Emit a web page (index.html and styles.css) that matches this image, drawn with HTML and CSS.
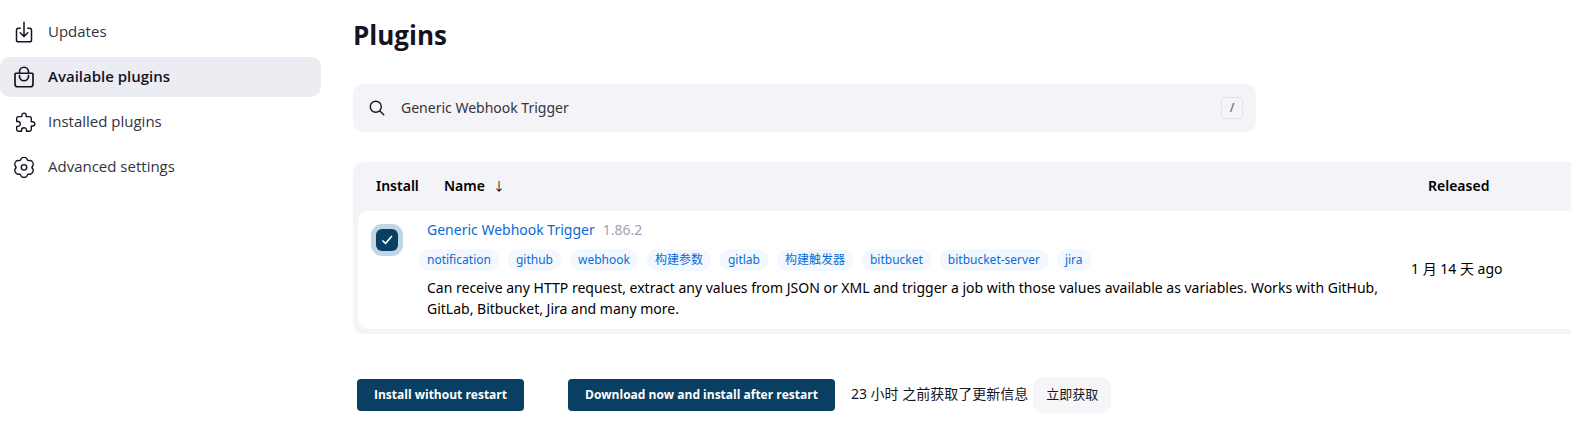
FILE: index.html
```html
<!DOCTYPE html>
<html lang="en">
<head>
<meta charset="utf-8">
<title>Plugins</title>
<link rel="stylesheet" href="styles.css">
</head>
<body>
<div class="page">
  <nav class="side">
    <a class="task" href="#"><svg class="icon" viewBox="0 0 512 512"><path d="M336 176h40a40 40 0 0140 40v208a40 40 0 01-40 40H136a40 40 0 01-40-40V216a40 40 0 0140-40h40M176 272l80 80 80-80M256 48v288"/></svg>Updates</a>
    <a class="task task-active" href="#"><svg class="icon" viewBox="0 0 512 512"><path d="M80 176a16 16 0 00-16 16v216c0 30.24 25.76 56 56 56h272c30.24 0 56-24.51 56-54.75V192a16 16 0 00-16-16zM160 176v-32a96 96 0 0196-96h0a96 96 0 0196 96v32M160 224v16a96 96 0 0096 96h0a96 96 0 0096-96v-16"/></svg>Available plugins</a>
    <a class="task" href="#"><svg class="icon" viewBox="-60 -24 552 552"><path d="M413.66 246.1H386a2 2 0 01-2-2v-77.24A38.86 38.86 0 00345.14 128H267.9a2 2 0 01-2-2V98.34c0-27.14-21.5-49.86-48.64-50.33a49.53 49.53 0 00-50.4 49.51V126a2 2 0 01-2 2H87.62A39.74 39.74 0 0048 167.62V238a2 2 0 002 2h26.91c29.37 0 53.68 25.48 54.09 54.85.42 29.87-23.51 57.15-53.29 57.15H50a2 2 0 00-2 2v70.38A39.74 39.74 0 0087.62 464H158a2 2 0 002-2v-20.93c0-30.28 24.75-56.35 55-57.06 30.1-.7 57 20.31 57 50.28V462a2 2 0 002 2h71.14A38.86 38.86 0 00384 425.14v-78a2 2 0 012-2h28.48c27.63 0 49.52-22.67 49.52-50.4s-23.2-48.64-50.34-48.64z"/></svg>Installed plugins</a>
    <a class="task" href="#"><svg class="icon" viewBox="-16 -24 544 544"><circle cx="256" cy="256" r="62"/><path d="M193 55C205 22 307 22 319 55Q335 119 399 100C433 94 482 179 462 207Q414 256 462 305C482 333 433 418 399 412Q335 393 319 457C307 490 205 490 193 457Q177 393 113 412C79 418 30 333 50 305Q98 256 50 207C30 179 79 94 113 100Q177 119 193 55Z"/></svg>Advanced settings</a>
  </nav>
  <main class="main">
    <h1 class="title">Plugins</h1>
    <label class="search">
      <svg class="search-icon" viewBox="0 0 512 512"><path d="M221.09 64a157.09 157.09 0 10157.09 157.09A157.1 157.1 0 00221.09 64zM338.29 338.29L448 448"/></svg>
      <input class="search-input" type="text" aria-label="Search available plugins" value="Generic Webhook Trigger">
      <kbd class="key">/</kbd>
    </label>
    <table class="plugins">
      <thead>
        <tr><th class="col-install">Install</th><th class="col-name">Name<span class="sort">↓</span></th><th class="col-date">Released</th></tr>
      </thead>
      <tbody>
        <tr>
          <td class="cell-check"><input class="check" type="checkbox" aria-label="Install Generic Webhook Trigger" checked></td>
          <td class="cell-info">
            <div class="heading"><a class="link" href="#">Generic Webhook Trigger</a><span class="version">1.86.2</span></div>
            <div class="tags"><a class="tag" href="#">notification</a><a class="tag" href="#">github</a><a class="tag" href="#">webhook</a><a class="tag" href="#">构建参数</a><a class="tag" href="#">gitlab</a><a class="tag" href="#">构建触发器</a><a class="tag" href="#">bitbucket</a><a class="tag" href="#">bitbucket-server</a><a class="tag" href="#">jira</a></div>
            <div class="excerpt">Can receive any HTTP request, extract any values from JSON or XML and trigger a job with those values available as variables. Works with GitHub, GitLab, Bitbucket, Jira and many more.</div>
          </td>
          <td class="cell-date">1 月 14 天 ago</td>
        </tr>
      </tbody>
    </table>
    <div class="actions">
      <button class="primary" type="button">Install without restart</button>
      <button class="primary" type="button">Download now and install after restart</button>
      <div class="refresh"><span class="refresh-text">23 小时 之前获取了更新信息</span><button class="secondary" type="button">立即获取</button></div>
    </div>
  </main>
</div>
</body>
</html>
```
FILE: styles.css
```css
* { box-sizing: border-box; }
body {
  margin: 0;
  background: #fff;
  color: #14141f;
  font: 14px/21px "Noto Sans", "Noto Sans CJK SC", sans-serif;
  overflow-x: hidden;
}
a { text-decoration: none; }
button, input { font: inherit; }
.page { display: flex; gap: 32px; }
.side { width: 321px; flex: none; padding-top: 12px; display: flex; flex-direction: column; gap: 5px; font-family: "Open Sans", sans-serif; font-size: 15px; }
.task { display: flex; align-items: center; gap: 12px; height: 40px; padding: 0 0 1px 12px; border-radius: 10px; color: #333340; }
.task-active { background: #ecedf3; color: #14141f; font-weight: 600; }
.icon { width: 24px; height: 24px; fill: none; stroke: #14141f; stroke-width: 32; stroke-linecap: round; stroke-linejoin: round; }
.task-active .icon { stroke-width: 36; }
.main { flex: 1; min-width: 0; padding-top: 18px; }
.title { margin: 0; font-size: 26px; line-height: 34px; font-weight: 700; font-family: "Open Sans", sans-serif; }
.search { display: flex; align-items: center; gap: 15px; max-width: 903px; height: 48px; margin-top: 32px; padding: 0 13px 0 15px; border-radius: 10px; background: #f3f3f8; }
.search-icon { width: 18px; height: 18px; flex: none; fill: none; stroke: #14141f; stroke-width: 40; stroke-linecap: round; }
.search-input { flex: 1; min-width: 0; padding: 0 0 2px; border: 0; outline: 0; background: none; color: #333340; }
.key { width: 22px; height: 22px; border: 1px solid #e2e2eb; border-radius: 4px; color: #6b6b85; font: 600 12px/20px "Open Sans", sans-serif; text-align: center; }
.plugins { width: calc(100% + 5px); margin-top: 30px; border: 5px solid #f3f3f8; border-top: 0; border-radius: 12px 0 0 12px; border-spacing: 0; border-collapse: separate; background: #f3f3f8; color: #000; }
th { height: 49px; padding: 0 0 2px; text-align: left; font-weight: 600; }
td { padding: 0; background: #fff; }
.col-install { width: 61px; padding-left: 18px; }
.col-name { padding-left: 25px; }
.col-date { width: 164px; padding-left: 21px; }
.sort { margin-left: 8px; font-size: 12px; font-weight: 400; }
.cell-check { padding: 18px 0 0 18px; vertical-align: top; border-radius: 10px 0 0 10px; }
.check { appearance: none; display: block; width: 22px; height: 22px; margin: 0; border-radius: 6px; background: #093f62 url("data:image/svg+xml,%3Csvg xmlns='http://www.w3.org/2000/svg' viewBox='0 0 22 22' fill='none' stroke='white' stroke-width='1.7' stroke-linecap='round' stroke-linejoin='round'%3E%3Cpath d='M7 12l2.500 2.500 6-7'/%3E%3C/svg%3E"); box-shadow: 0 0 0 5px #c1d6e4; }
.cell-info { padding: 8px 0 10px 0; }
.heading, .excerpt { padding-left: 8px; }
.link { color: #0b6ad8; }
.version { margin-left: 8px; color: #a29fb5; }
.tags { display: flex; flex-wrap: wrap; gap: 9px; margin: 9px 0 6px; }
.tag { height: 22px; padding: 0 8px; border-radius: 11px; background: #f2f8fd; color: #0b6ad8; font-size: 12px; line-height: 21px; }
.cell-date { padding: 0 0 4px 4px; }
.actions { display: flex; align-items: center; gap: 44px; margin-top: 43px; padding-left: 4px; }
.primary { height: 32px; padding: 0 17px 2px; border: 0; border-radius: 4px; background: #093f62; color: #fff; font-size: 12px; font-weight: 700; font-family: "Open Sans", sans-serif; }
.refresh { display: flex; align-items: center; gap: 5px; margin-left: -28px; }
.refresh-text { padding-bottom: 3px; }
.secondary { height: 36px; padding: 0 13px 2px; border: 0; border-radius: 10px; background: #f6f6f9; color: #14141f; font-size: 13px; }
```
